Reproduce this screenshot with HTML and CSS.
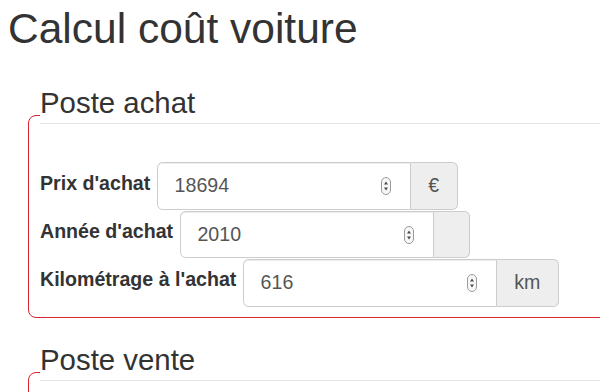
FILE: index.html
```html
<!DOCTYPE html>
<html lang="fr">
<head>
  <meta charset="UTF-8" />
  <meta name="viewport" content="width=device-width, initial-scale=1.0" />
  <title>Calcul coût voiture</title>
  <link rel="stylesheet" href="styles.css">
</head>
<body>
  <div class="container">
    <h2>Calcul coût voiture</h2>
    <form>
      <fieldset class="poste">
        <legend><span class="titre">Poste achat</span></legend>
        <div class="form-group">
          <label for="prixAchat">Prix d'achat</label>
          <div class="input-group">
            <div class="field">
              <input type="text" id="prixAchat" value="18694">
              <svg class="spin" viewBox="0 0 10 18"><rect x="0.5" y="0.5" width="9" height="17" rx="4.5" fill="#f8f8f8" stroke="#9a9a9a"/><path d="M3 7.6 5 4.6 7 7.6Z M3 10.4 5 13.4 7 10.4Z" fill="#4a4a4a"/></svg>
            </div>
            <span class="addon">€</span>
          </div>
        </div>
        <div class="form-group">
          <label for="anneeAchat">Année d'achat</label>
          <div class="input-group">
            <div class="field">
              <input type="text" id="anneeAchat" value="2010">
              <svg class="spin" viewBox="0 0 10 18"><rect x="0.5" y="0.5" width="9" height="17" rx="4.5" fill="#f8f8f8" stroke="#9a9a9a"/><path d="M3 7.6 5 4.6 7 7.6Z M3 10.4 5 13.4 7 10.4Z" fill="#4a4a4a"/></svg>
            </div>
            <span class="addon"></span>
          </div>
        </div>
        <div class="form-group">
          <label for="kmAchat">Kilométrage à l'achat</label>
          <div class="input-group">
            <div class="field">
              <input type="text" id="kmAchat" value="616">
              <svg class="spin" viewBox="0 0 10 18"><rect x="0.5" y="0.5" width="9" height="17" rx="4.5" fill="#f8f8f8" stroke="#9a9a9a"/><path d="M3 7.6 5 4.6 7 7.6Z M3 10.4 5 13.4 7 10.4Z" fill="#4a4a4a"/></svg>
            </div>
            <span class="addon">km</span>
          </div>
        </div>
      </fieldset>
      <fieldset class="poste vente">
        <legend><span class="titre">Poste vente</span></legend>
      </fieldset>
    </form>
  </div>
</body>
</html>
```

FILE: styles.css
```css
* {
  box-sizing: border-box;
}
html, body {
  overflow: hidden;
}
body {
  margin: 0;
  padding: 6px 8px;
  font-family: "Liberation Sans", Arial, sans-serif;
  font-size: 19.6px;
  line-height: 1.42857;
  color: #333;
  background: #fff;
}
.container {
  width: 860px;
}
h2 {
  margin: 0 0 29px;
  font-size: 42.5px;
  font-weight: 400;
  line-height: 1.1;
}
.poste {
  margin: 0 0 21px 20px;
  padding: 12.7px 0 9.5px 11px;
  min-width: 0;
  border: 1px solid #dc2430;
  border-radius: 8px;
}
.vente {
  min-height: 120px;
}
legend {
  width: 100%;
  margin: 0;
  padding: 0 0 26px;
}
legend .titre {
  display: block;
  font-size: 29.4px;
  line-height: 41px;
  color: #333;
  border-bottom: 1px solid #e5e5e5;
}
.form-group {
  display: flex;
  align-items: center;
  gap: 6.5px;
  margin-bottom: 0.7px;
}
.form-group label {
  font-weight: 700;
  line-height: 28px;
  margin-bottom: 7px;
}
.input-group {
  display: flex;
  height: 47.6px;
}
.field {
  display: flex;
  align-items: center;
  width: 254px;
  padding: 0 16.8px;
  background: #fff;
  border: 1px solid #ccc;
  border-radius: 5.6px 0 0 5.6px;
  box-shadow: inset 0 1px 1px rgba(0,0,0,0.075);
}
.field input {
  flex: 1;
  min-width: 0;
  padding: 0;
  border: none;
  outline: none;
  background: transparent;
  font: inherit;
  color: #555;
}
.spin {
  flex: none;
  width: 10px;
  height: 18px;
  margin-right: 2px;
}
.addon {
  display: flex;
  align-items: center;
  padding: 0 17.5px;
  background: #eee;
  border: 1px solid #ccc;
  border-left: none;
  border-radius: 0 5.6px 5.6px 0;
  color: #555;
}
```
